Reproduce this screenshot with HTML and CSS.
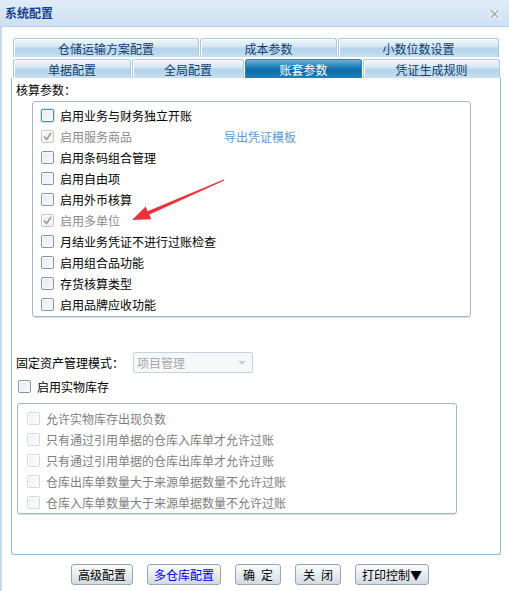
FILE: index.html
```html
<!DOCTYPE html>
<html lang="zh">
<head>
  <meta charset="UTF-8">
  <title>系统配置</title>
  <link rel="stylesheet" href="styles.css">
</head>
<body>
  <div class="window">
    <div class="titlebar">
      <span class="title">系统配置</span>
      <svg class="close" width="11" height="10" viewBox="0 0 11 10">
        <path d="M1.5 1 L9.5 9 M9.5 1 L1.5 9" stroke="#f4f7fa" stroke-width="3.2" stroke-linecap="round"/>
        <path d="M1.5 1 L9.5 9 M9.5 1 L1.5 9" stroke="#9ba7b3" stroke-width="1.3"/>
      </svg>
    </div>

    <div class="body">
      <div class="tabs">
        <div class="tab-row">
          <div class="tab" style="width:186px">仓储运输方案配置</div>
          <div class="tab" style="width:137px">成本参数</div>
          <div class="tab" style="width:161px">小数位数设置</div>
        </div>
        <div class="tab-row">
          <div class="tab" style="width:118px">单据配置</div>
          <div class="tab" style="width:112px">全局配置</div>
          <div class="tab active" style="width:117px">账套参数</div>
          <div class="tab" style="width:137px">凭证生成规则</div>
        </div>
      </div>

      <div class="panel">
        <div class="section-label">核算参数：</div>
        <div class="group main-group">
          <div class="check-row"><span class="box focus"></span>启用业务与财务独立开账</div>
          <div class="check-row disabled"><span class="box checked"><svg width="11" height="11" viewBox="0 0 11 11"><path d="M2 5.5 L4.5 8.5 L9 2" fill="none" stroke="#9a9a9a" stroke-width="1.6"/></svg></span>启用服务商品<span class="export-link">导出凭证模板</span></div>
          <div class="check-row"><span class="box"></span>启用条码组合管理</div>
          <div class="check-row"><span class="box"></span>启用自由项</div>
          <div class="check-row"><span class="box"></span>启用外币核算</div>
          <div class="check-row disabled"><span class="box checked"><svg width="11" height="11" viewBox="0 0 11 11"><path d="M2 5.5 L4.5 8.5 L9 2" fill="none" stroke="#9a9a9a" stroke-width="1.6"/></svg></span>启用多单位</div>
          <div class="check-row"><span class="box"></span>月结业务凭证不进行过账检查</div>
          <div class="check-row"><span class="box"></span>启用组合品功能</div>
          <div class="check-row"><span class="box"></span>存货核算类型</div>
          <div class="check-row"><span class="box"></span>启用品牌应收功能</div>
        </div>

        <div class="select-row">
          <span class="select-label">固定资产管理模式：</span>
          <div class="select">
            <span>项目管理</span>
            <span class="select-arrow"></span>
          </div>
        </div>

        <div class="check-row stock-row"><span class="box"></span>启用实物库存</div>

        <div class="group stock-group">
          <div class="check-row faded"><span class="box"></span>允许实物库存出现负数</div>
          <div class="check-row faded"><span class="box"></span>只有通过引用单据的仓库入库单才允许过账</div>
          <div class="check-row faded"><span class="box"></span>只有通过引用单据的仓库出库单才允许过账</div>
          <div class="check-row faded"><span class="box"></span>仓库出库单数量大于来源单据数量不允许过账</div>
          <div class="check-row faded"><span class="box"></span>仓库入库单数量大于来源单据数量不允许过账</div>
        </div>

        <svg class="arrow" width="490" height="200" viewBox="0 0 490 200">
          <polygon points="212.3,102.5 211.7,101.5 135.6,133.2 133.7,128.4 120,142 139.3,141.2 137.4,136.4" fill="#ef3038"/>
        </svg>
      </div>

      <div class="buttons">
        <button class="btn" style="width:62px">高级配置</button>
        <button class="btn link" style="width:74px">多仓库配置</button>
        <button class="btn" style="width:46px">确&ensp;定</button>
        <button class="btn" style="width:46px">关&ensp;闭</button>
        <button class="btn" style="width:74px">打印控制▼</button>
      </div>
    </div>
  </div>
</body>
</html>
```

FILE: styles.css
```css
body {
  margin: 0;
  padding: 0;
  background: #fff;
  font-family: 'Noto Sans CJK SC', 'Noto Sans', sans-serif;
  font-size: 12px;
  color: #000;
}

.window {
  width: 509px;
  height: 591px;
  overflow: hidden;
}

.titlebar {
  height: 26px;
  border-bottom: 1px solid #b9d1ec;
  background: linear-gradient(#e1ecf8, #cde0f4);
  display: flex;
  align-items: center;
  justify-content: space-between;
  padding: 0 9px 0 5px;
}

.title {
  color: #15428b;
  font-weight: bold;
  font-size: 12px;
  line-height: 14px;
}

.close {
  display: block;
  margin-top: 1px;
}

.body {
  border-left: 2px solid #c4dbf2;
  padding: 11px 0 0 9px;
  height: 553px;
}

.tabs {
  padding-left: 2px;
}

.tab-row {
  display: flex;
  gap: 1px;
  margin-bottom: 2px;
}

.tab-row:last-child {
  margin-bottom: 0;
}

.tab {
  box-sizing: border-box;
  height: 19px;
  border: 1px solid #a9cbe2;
  border-bottom: none;
  border-radius: 3px 3px 0 0;
  box-shadow: inset 1px 1px 0 #fff;
  background: linear-gradient(#f1f7fc 0%, #d6e7f4 40%, #b5d3e9 55%, #c8e0f1 100%);
  color: #0f3e6f;
  text-align: center;
  line-height: 20px;
  font-size: 12px;
}

.tab.active {
  background: linear-gradient(#6fb3da 0%, #2b8cc2 30%, #0b6aa3 55%, #1a84bc 100%);
  border-color: #2d7fae;
  box-shadow: none;
  color: #fff;
}

.panel {
  position: relative;
  width: 488px;
  height: 476px;
  border: 1px solid #8dbad6;
  border-top: none;
  border-radius: 0 0 3px 3px;
}

.section-label {
  padding: 4px 0 0 4px;
  line-height: 16px;
  margin-bottom: 3px;
}

.group {
  border: 1px solid #a5b6c7;
  border-radius: 3px;
  box-shadow: 0 1px 0 #d6dee6;
}

.main-group {
  margin-left: 20px;
  width: 429px;
  padding: 3px 0 0 8px;
  height: 211px;
}

.check-row {
  display: flex;
  align-items: center;
  height: 21px;
  white-space: nowrap;
}

.box {
  width: 11px;
  height: 11px;
  border: 1px solid #8796a6;
  border-radius: 2px;
  background: linear-gradient(135deg, #e3e9ef, #fbfcfd);
  box-shadow: inset 1px 1px 0 #fff;
  margin-right: 6px;
  flex: none;
  display: flex;
  align-items: center;
  justify-content: center;
}

.box.focus {
  border-color: #4d8ea4;
  box-shadow: 0 0 0 1px #cfe6ee, inset 1px 1px 0 #fff;
}

.box.checked {
  border-color: #c6c6c6;
  background: #f4f4f4;
}

.check-row.disabled {
  color: #8a8a8a;
}

.export-link {
  margin-left: 92px;
  color: #5d9bd3;
}

.select-row {
  display: flex;
  align-items: center;
  height: 21px;
  margin-top: 35px;
  padding-left: 4px;
}

.select-label {
  width: 117px;
}

.select {
  width: 115px;
  height: 19px;
  border: 1px solid #c5d3df;
  border-radius: 2px;
  background: #f6f8fa;
  color: #a8a8a8;
  display: flex;
  align-items: center;
  justify-content: space-between;
  padding-left: 3px;
}

.select-arrow {
  width: 0;
  height: 0;
  border-left: 4px solid transparent;
  border-right: 4px solid transparent;
  border-top: 4px solid #c8d2dc;
  margin-right: 6px;
}

.stock-row {
  margin-top: 3px;
  padding-left: 6px;
}

.stock-group {
  margin: 6px 0 0 5px;
  width: 429px;
  height: 105px;
  padding: 4px 0 0 9px;
}

.check-row.faded {
  color: #808080;
}

.check-row.faded .box {
  border-color: #d3dae1;
  background: linear-gradient(135deg, #eef1f4, #fcfdfd);
}

.arrow {
  position: absolute;
  left: 0;
  top: 0;
  pointer-events: none;
}

.buttons {
  display: flex;
  gap: 14px;
  padding-left: 60px;
  margin-top: 9px;
}

.btn {
  height: 21px;
  padding: 0;
  border: 1px solid #98a6b3;
  border-radius: 3px;
  background: linear-gradient(#fbfcfd, #e7ecf0 50%, #d3dbe2);
  font-family: 'Noto Sans CJK SC', 'Noto Sans', sans-serif;
  font-size: 12px;
  color: #000;
  line-height: 18px;
}

.btn.link {
  color: #0000ee;
}
```
